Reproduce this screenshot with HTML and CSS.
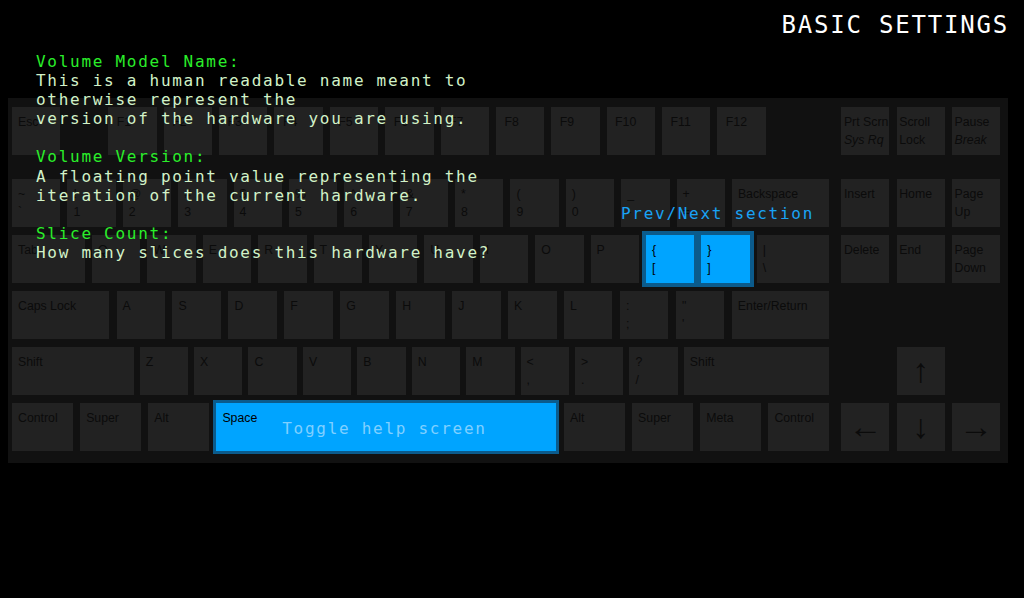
FILE: index.html
```html
<!DOCTYPE html>
<html lang="en">
<head>
<meta charset="utf-8">
<title>Basic Settings</title>
<link rel="stylesheet" href="styles.css">
</head>
<body>
<div class="screen">
  <header class="title-bar">
    <h1 class="title">BASIC SETTINGS</h1>
  </header>

  <div class="keyboard">
    <div class="main">
      <div class="row row-fn">
        <div class="key key-esc"><span>Esc</span></div>
        <div class="key fkey"><span>F1</span></div>
        <div class="key fkey"><span>F2</span></div>
        <div class="key fkey"><span>F3</span></div>
        <div class="key fkey"><span>F4</span></div>
        <div class="key fkey"><span>F5</span></div>
        <div class="key fkey"><span>F6</span></div>
        <div class="key fkey"><span>F7</span></div>
        <div class="key fkey"><span>F8</span></div>
        <div class="key fkey"><span>F9</span></div>
        <div class="key fkey"><span>F10</span></div>
        <div class="key fkey"><span>F11</span></div>
        <div class="key fkey"><span>F12</span></div>
      </div>
      <div class="row">
        <div class="key"><span>~</span><span>`</span></div>
        <div class="key"><span>!</span><span>1</span></div>
        <div class="key"><span>@</span><span>2</span></div>
        <div class="key"><span>#</span><span>3</span></div>
        <div class="key"><span>$</span><span>4</span></div>
        <div class="key"><span>%</span><span>5</span></div>
        <div class="key"><span>^</span><span>6</span></div>
        <div class="key"><span>&amp;</span><span>7</span></div>
        <div class="key"><span>*</span><span>8</span></div>
        <div class="key"><span>(</span><span>9</span></div>
        <div class="key"><span>)</span><span>0</span></div>
        <div class="key"><span>_</span><span>-</span></div>
        <div class="key"><span>+</span><span>=</span></div>
        <div class="key key-backspace"><span>Backspace</span></div>
      </div>
      <div class="row">
        <div class="key key-tab"><span>Tab</span></div>
        <div class="key"><span>Q</span></div>
        <div class="key"><span>W</span></div>
        <div class="key"><span>E</span></div>
        <div class="key"><span>R</span></div>
        <div class="key"><span>T</span></div>
        <div class="key"><span>Y</span></div>
        <div class="key"><span>U</span></div>
        <div class="key"><span>I</span></div>
        <div class="key"><span>O</span></div>
        <div class="key"><span>P</span></div>
        <div class="key key-active key-bracket"><span>{</span><span>[</span></div>
        <div class="key key-active key-bracket"><span>}</span><span>]</span></div>
        <div class="key key-pipe"><span>|</span><span>\</span></div>
      </div>
      <div class="row">
        <div class="key key-caps"><span>Caps Lock</span></div>
        <div class="key"><span>A</span></div>
        <div class="key"><span>S</span></div>
        <div class="key"><span>D</span></div>
        <div class="key"><span>F</span></div>
        <div class="key"><span>G</span></div>
        <div class="key"><span>H</span></div>
        <div class="key"><span>J</span></div>
        <div class="key"><span>K</span></div>
        <div class="key"><span>L</span></div>
        <div class="key"><span>:</span><span>;</span></div>
        <div class="key"><span>"</span><span>'</span></div>
        <div class="key key-enter"><span>Enter/Return</span></div>
      </div>
      <div class="row">
        <div class="key key-lshift"><span>Shift</span></div>
        <div class="key"><span>Z</span></div>
        <div class="key"><span>X</span></div>
        <div class="key"><span>C</span></div>
        <div class="key"><span>V</span></div>
        <div class="key"><span>B</span></div>
        <div class="key"><span>N</span></div>
        <div class="key"><span>M</span></div>
        <div class="key"><span>&lt;</span><span>,</span></div>
        <div class="key"><span>&gt;</span><span>.</span></div>
        <div class="key"><span>?</span><span>/</span></div>
        <div class="key key-rshift"><span>Shift</span></div>
      </div>
      <div class="row">
        <div class="key key-mod"><span>Control</span></div>
        <div class="key key-mod"><span>Super</span></div>
        <div class="key key-mod"><span>Alt</span></div>
        <div class="key key-active key-space">
          <span>Space</span>
          <span class="space-hint">Toggle help screen</span>
        </div>
        <div class="key key-mod"><span>Alt</span></div>
        <div class="key key-mod"><span>Super</span></div>
        <div class="key key-mod"><span>Meta</span></div>
        <div class="key key-mod"><span>Control</span></div>
      </div>
    </div>

    <div class="nav">
      <div class="row row-fn">
        <div class="key nkey"><span>Prt Scrn</span><em>Sys Rq</em></div>
        <div class="key nkey"><span>Scroll</span><span>Lock</span></div>
        <div class="key nkey"><span>Pause</span><em>Break</em></div>
      </div>
      <div class="row">
        <div class="key nkey"><span>Insert</span></div>
        <div class="key nkey"><span>Home</span></div>
        <div class="key nkey"><span>Page</span><span>Up</span></div>
      </div>
      <div class="row">
        <div class="key nkey"><span>Delete</span></div>
        <div class="key nkey"><span>End</span></div>
        <div class="key nkey"><span>Page</span><span>Down</span></div>
      </div>
      <div class="row"></div>
      <div class="row row-center">
        <div class="key nkey key-arrow"><span>↑</span></div>
      </div>
      <div class="row">
        <div class="key nkey key-arrow"><span>←</span></div>
        <div class="key nkey key-arrow"><span>↓</span></div>
        <div class="key nkey key-arrow"><span>→</span></div>
      </div>
    </div>
  </div>

  <div class="help">
    <section class="help-item">
      <h2 class="help-label">Volume Model Name:</h2>
      <p class="help-text">This is a human readable name meant to<br>otherwise represent the<br>version of the hardware you are using.</p>
    </section>
    <section class="help-item">
      <h2 class="help-label">Volume Version:</h2>
      <p class="help-text">A floating point value representing the<br>iteration of the current hardware.</p>
    </section>
    <section class="help-item">
      <h2 class="help-label">Slice Count:</h2>
      <p class="help-text">How many slices does this hardware have?</p>
    </section>
  </div>

  <div class="section-hint">Prev/Next section</div>
</div>
</body>
</html>
```

FILE: styles.css
```css
* {
  box-sizing: border-box;
}

html,
body {
  margin: 0;
  padding: 0;
  background: #000;
}

body {
  font-family: "Liberation Sans", Arial, sans-serif;
}

.screen {
  position: relative;
  width: 1024px;
  height: 598px;
  overflow: hidden;
  background: #000;
}

/* Title */
.title-bar {
  height: 98px;
  padding: 11px 15px 0 0;
  display: flex;
  justify-content: flex-end;
  align-items: flex-start;
}

.title {
  margin: 0;
  font-family: "DejaVu Sans Mono", monospace;
  font-weight: normal;
  font-size: 24px;
  line-height: 28px;
  letter-spacing: 1.8px;
  color: #fff;
}

/* Keyboard */
.keyboard {
  margin-left: 8px;
  width: 1000px;
  height: 365px;
  background: #111;
  padding: 9px 8px 12px 4px;
  display: flex;
  justify-content: space-between;
}

.main {
  width: 817px;
  display: flex;
  flex-direction: column;
  gap: 8px;
}

.nav {
  width: 158.6px;
  display: flex;
  flex-direction: column;
  gap: 8px;
}

.row {
  display: flex;
  justify-content: space-between;
  height: 48px;
  flex: none;
}

.row-fn {
  margin-bottom: 16px;
}

.main .row-fn {
  justify-content: flex-start;
  gap: 6.98px;
}

.row-center {
  justify-content: center;
}

.key {
  flex: none;
  width: 48.4px;
  height: 48px;
  background: #222;
  color: #0b0b0b;
  font-size: 12.3px;
  line-height: 18px;
  padding: 6px 0 0 6px;
  white-space: nowrap;
}

.key span,
.key em {
  display: block;
}

.key-esc {
  margin-right: 41px;
}

.fkey {
  padding-left: 8.5px;
}

.key-backspace,
.key-caps,
.key-enter {
  width: 97px;
}

.key-tab {
  width: 73px;
}

.key-pipe {
  width: 72.2px;
}

.key-lshift {
  width: 121.6px;
}

.key-rshift {
  width: 145px;
}

.key-mod {
  width: 60.6px;
}

.key-space {
  width: 340px;
  position: relative;
}

.key-active {
  background: #00a4ff;
  color: #000;
}

.key-bracket {
  box-shadow: 0 0 0 4px #0b5b8c;
}

.key-space {
  box-shadow: 0 0 0 3px #0b5b8c;
}

.nkey {
  width: 48px;
  padding-left: 2.5px;
}

.key-arrow {
  padding: 0 0 2px;
  display: flex;
  align-items: center;
  justify-content: center;
  font-size: 34px;
  line-height: 1;
}

/* Overlaid monospace texts */
.space-hint,
.help,
.section-hint {
  font-family: "DejaVu Sans Mono", monospace;
  font-size: 16px;
  line-height: 19.1px;
  letter-spacing: 1.72px;
}

.key-space .space-hint {
  position: absolute;
  inset: 0;
  display: flex;
  align-items: center;
  justify-content: center;
  padding: 3px 4px 0 0;
  color: #80d0ff;
}

.help {
  position: absolute;
  top: 52px;
  left: 36px;
  color: #d2f2c8;
}

.help-item {
  margin-bottom: 19.1px;
}

.help-label {
  margin: 0;
  font: inherit;
  color: #2aee2a;
}

.help-text {
  margin: 0;
}

.section-hint {
  position: absolute;
  top: 204px;
  left: 621px;
  color: #19a3f5;
}
```
